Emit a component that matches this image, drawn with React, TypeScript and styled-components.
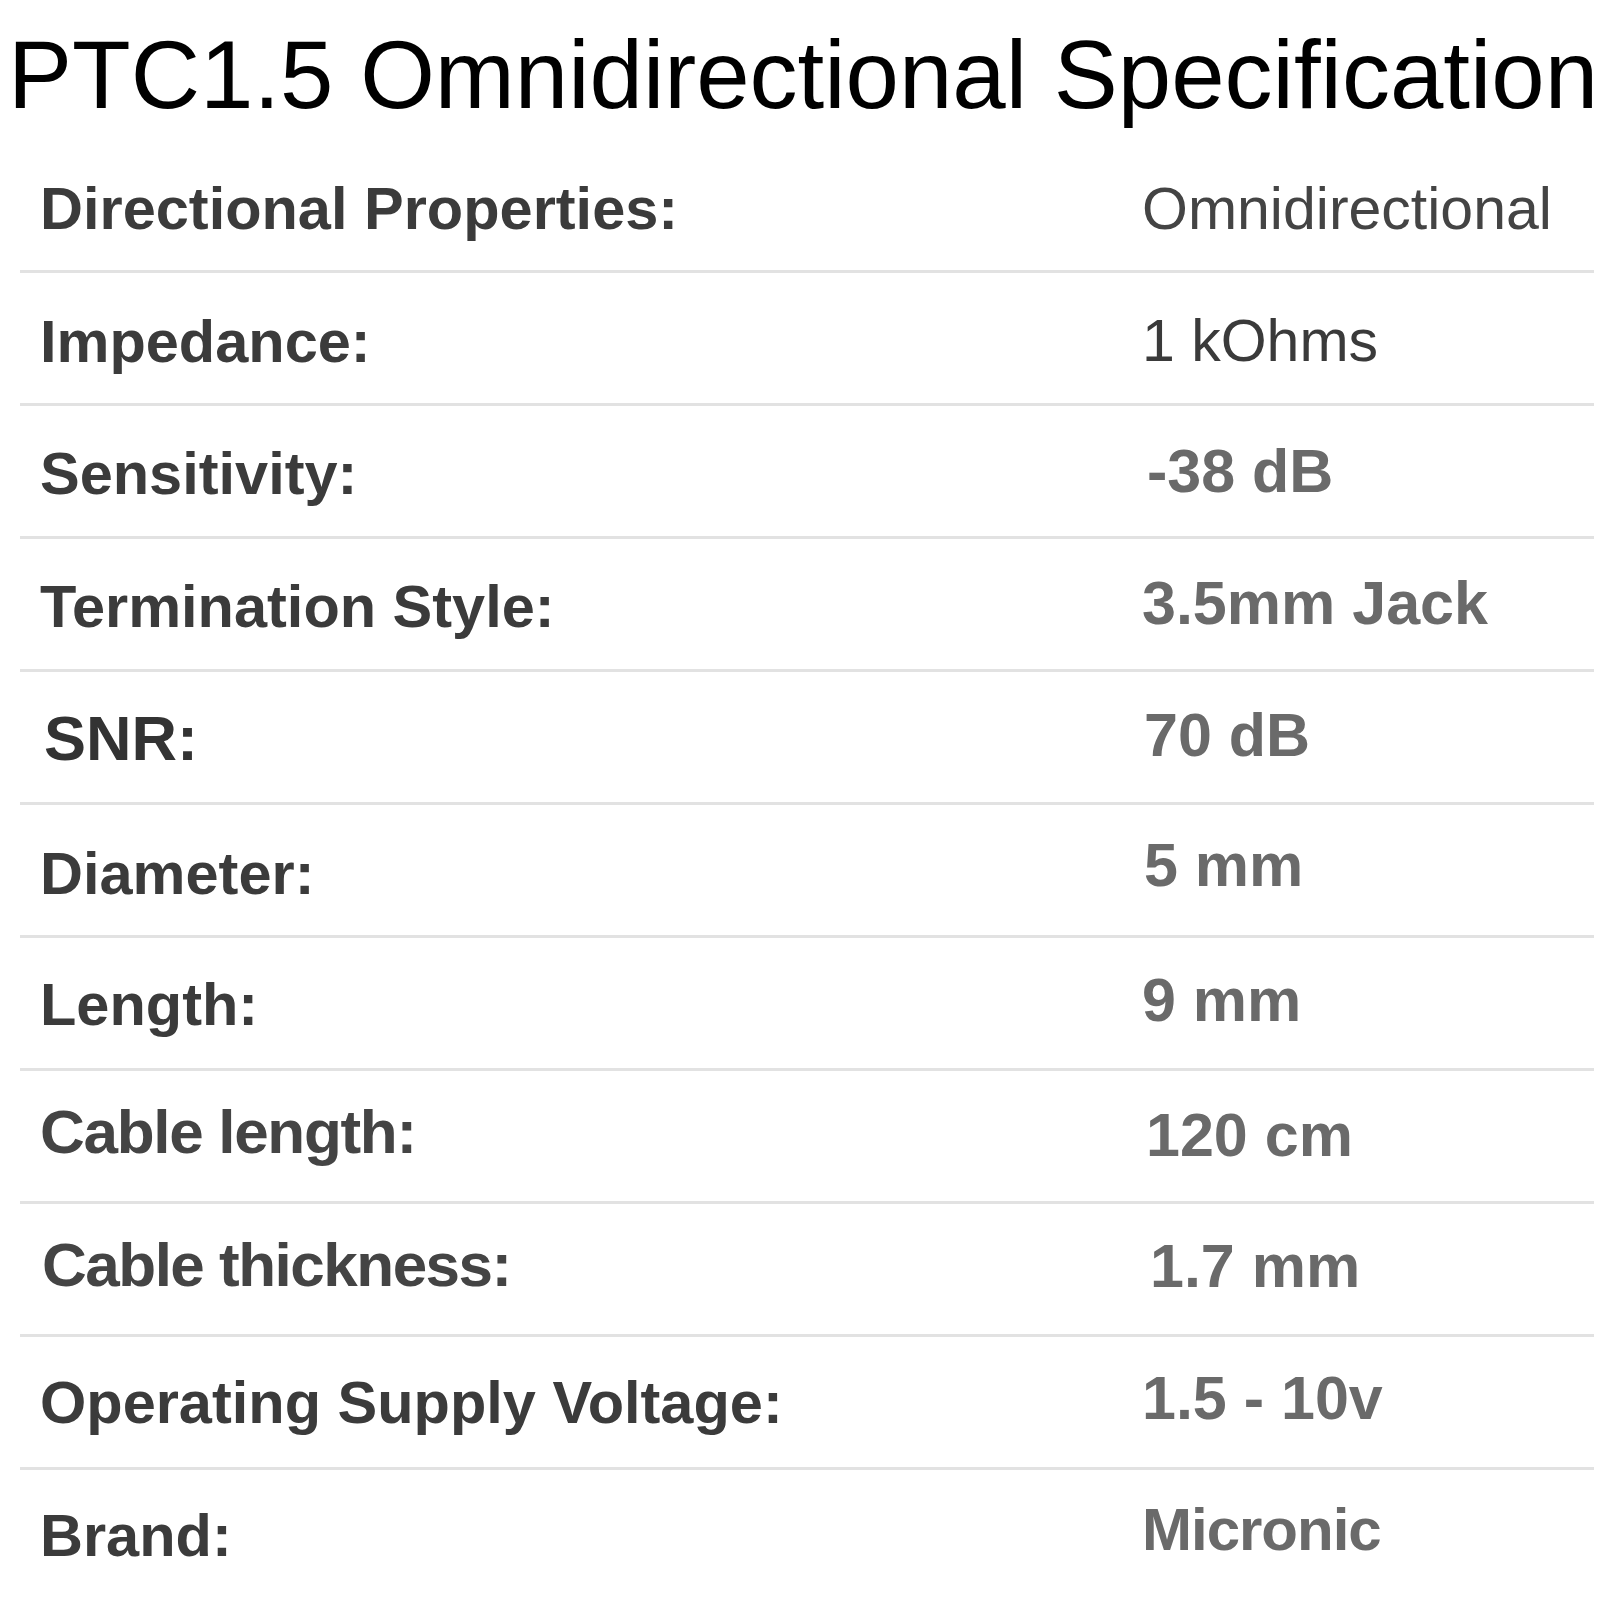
import styled, { createGlobalStyle } from 'styled-components';

const GlobalStyle = createGlobalStyle`
  html, body {
    margin: 0;
    padding: 0;
    background: #ffffff;
  }
  body {
    font-family: 'Liberation Sans', Arial, sans-serif;
  }
`;

const Page = styled.div`
  width: 1600px;
  height: 1600px;
  overflow: hidden;
  background: #fff;
`;

const Title = styled.h1`
  margin: 0 0 12px 0;
  padding: 21px 0 0 8px;
  font-size: 96px;
  font-weight: 400;
  line-height: 107px;
  color: #000;
  white-space: nowrap;
`;

const Table = styled.div`
  margin-left: 20px;
  width: 1574px;
`;

const Row = styled.div`
  display: grid;
  grid-template-columns: 1102px 1fr;
  height: 130px;
  padding-left: 20px;
  border-bottom: 3px solid #e2e2e2;

  &:last-child {
    border-bottom: none;
  }
`;

type CellProps = {
  $size: number;
  $base: number;
  $weight: number;
  $color: string;
  $spacing?: number;
  $dx?: number;
};

// padding-top puts the baseline $base px below the row top (line-height 1)
const Cell = styled.div<CellProps>`
  font-size: ${(p) => p.$size}px;
  line-height: 1;
  font-weight: ${(p) => p.$weight};
  color: ${(p) => p.$color};
  letter-spacing: ${(p) => p.$spacing ?? 0}px;
  padding-top: ${(p) => p.$base - 0.8465 * p.$size}px;
  padding-left: ${(p) => p.$dx ?? 0}px;
  white-space: nowrap;
`;

type Spec = {
  label: string;
  value: string;
  l: CellProps;
  v: CellProps;
};

const LABEL = '#3b3b3b';
const VALUE = '#6a6a6a';

const specs: Spec[] = [
  {
    label: 'Directional Properties:',
    value: 'Omnidirectional',
    l: { $size: 59.5, $base: 89, $weight: 700, $color: LABEL },
    v: { $size: 59, $base: 90, $weight: 400, $color: '#444' },
  },
  {
    label: 'Impedance:',
    value: '1 kOhms',
    l: { $size: 59.5, $base: 89, $weight: 700, $color: LABEL },
    v: { $size: 59, $base: 89, $weight: 400, $color: '#3a3a3a' },
  },
  {
    label: 'Sensitivity:',
    value: '-38 dB',
    l: { $size: 59.5, $base: 88, $weight: 700, $color: LABEL },
    v: { $size: 61, $base: 87, $weight: 700, $color: VALUE, $dx: 5 },
  },
  {
    label: 'Termination Style:',
    value: '3.5mm Jack',
    l: { $size: 59.5, $base: 88, $weight: 700, $color: LABEL },
    v: { $size: 61, $base: 86, $weight: 700, $color: VALUE },
  },
  {
    label: 'SNR:',
    value: '70 dB',
    l: { $size: 63, $base: 88, $weight: 700, $color: '#333', $dx: 4 },
    v: { $size: 61, $base: 85, $weight: 700, $color: VALUE, $dx: 2 },
  },
  {
    label: 'Diameter:',
    value: '5 mm',
    l: { $size: 59.5, $base: 89, $weight: 700, $color: LABEL },
    v: { $size: 61, $base: 82, $weight: 700, $color: VALUE, $dx: 2 },
  },
  {
    label: 'Length:',
    value: '9 mm',
    l: { $size: 59.5, $base: 87, $weight: 700, $color: LABEL },
    v: { $size: 61, $base: 84, $weight: 700, $color: VALUE },
  },
  {
    label: 'Cable length:',
    value: '120 cm',
    l: { $size: 62, $base: 82, $weight: 700, $color: '#444', $spacing: -1.3 },
    v: { $size: 61, $base: 86, $weight: 700, $color: VALUE, $dx: 4 },
  },
  {
    label: 'Cable thickness:',
    value: '1.7 mm',
    l: { $size: 62, $base: 82, $weight: 700, $color: '#444', $spacing: -1.5, $dx: 2 },
    v: { $size: 61, $base: 84, $weight: 700, $color: VALUE, $dx: 8 },
  },
  {
    label: 'Operating Supply Voltage:',
    value: '1.5 - 10v',
    l: { $size: 59.5, $base: 86, $weight: 700, $color: LABEL },
    v: { $size: 61, $base: 83, $weight: 700, $color: VALUE, $dx: -5 },
  },
  {
    label: 'Brand:',
    value: 'Micronic',
    l: { $size: 59.5, $base: 86, $weight: 700, $color: LABEL },
    v: { $size: 60, $base: 81, $weight: 700, $color: VALUE, $spacing: -1 },
  },
];

export default function App() {
  return (
    <Page>
      <GlobalStyle />
      <Title>PTC1.5 Omnidirectional Specification</Title>
      <Table>
        {specs.map((s) => (
          <Row key={s.label}>
            <Cell {...s.l}>{s.label}</Cell>
            <Cell {...s.v}>{s.value}</Cell>
          </Row>
        ))}
      </Table>
    </Page>
  );
}
